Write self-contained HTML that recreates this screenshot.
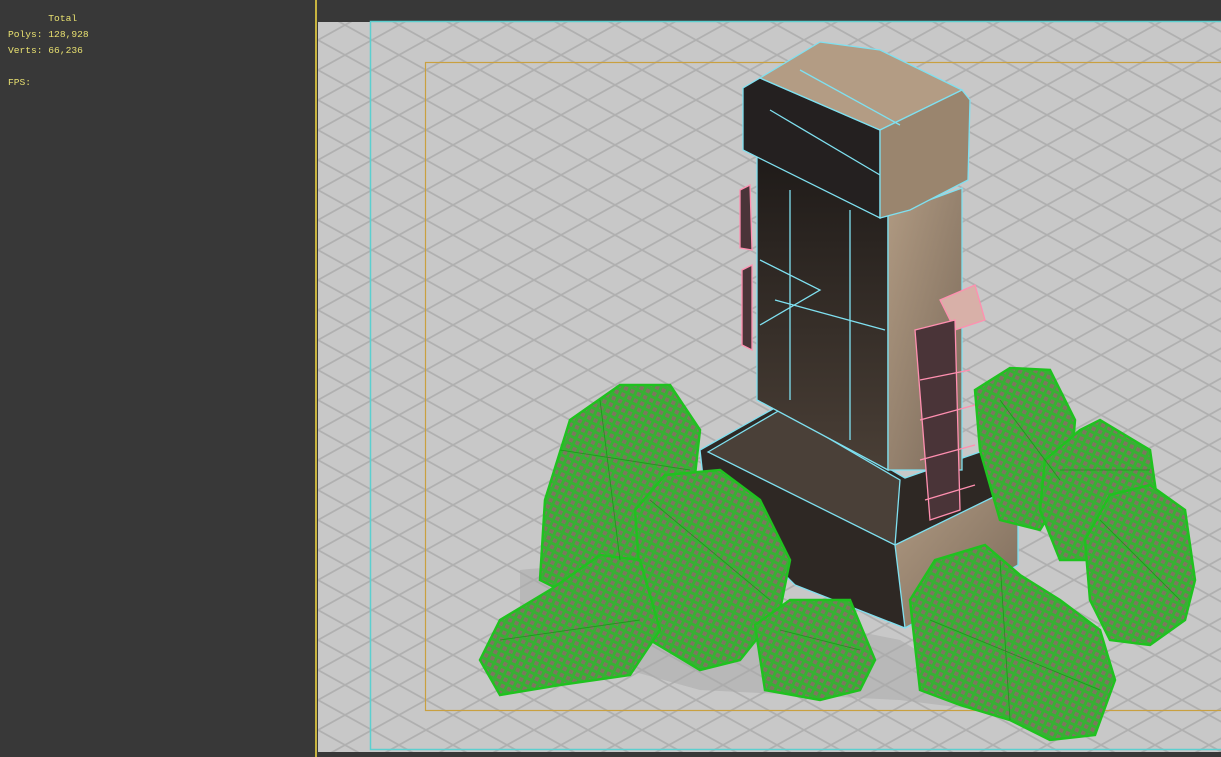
<!DOCTYPE html>
<html><head><meta charset="utf-8"><style>
html,body{margin:0;padding:0;width:1221px;height:757px;overflow:hidden;background:#383838;font-family:"Liberation Mono",monospace}
.t{position:absolute;color:#e8e070;font-size:9.6px;font-family:"Liberation Mono",monospace;white-space:pre;line-height:16px}
</style></head><body>
<div class="t" style="left:8px;top:11px">       Total
Polys: 128,928
Verts: 66,236

FPS:</div>
<div style="position:absolute;left:315px;top:0;width:2px;height:757px;background:#c8b440"></div>
<svg style="position:absolute;left:0;top:0" width="1221" height="757" viewBox="0 0 1221 757">
<defs>
<pattern id="g" width="54" height="30" patternUnits="userSpaceOnUse" x="318" y="10">
<rect width="54" height="30" fill="#c8c8c8"/>
<path d="M0 0 L54 30 M54 0 L0 30" stroke="#b0b0b0" stroke-width="1.8"/>
</pattern>
<pattern id="w" width="7" height="7" patternUnits="userSpaceOnUse" patternTransform="rotate(25)">
<rect width="7" height="7" fill="#38b034"/>
<rect x="1.5" y="1.5" width="4" height="4" fill="#7f7560"/>
</pattern>
<linearGradient id="sh" x1="0" x2="0" y1="0" y2="1"><stop offset="0" stop-color="#1e1a18"/><stop offset="1" stop-color="#4a3f36"/></linearGradient>
<linearGradient id="tan" x1="0" x2="1" y1="0" y2="1"><stop offset="0" stop-color="#b09a82"/><stop offset="1" stop-color="#7b6a5a"/></linearGradient>
</defs>
<rect x="318" y="22" width="903" height="730" fill="url(#g)"/>
<rect x="370.5" y="21.5" width="860" height="728" fill="none" stroke="#5ccfcf" stroke-width="1.5"/>
<rect x="425.5" y="62.5" width="800" height="648" fill="none" stroke="#c9a040" stroke-width="1.2"/>
<path d="M520 570 Q600 560 700 600 L900 640 L1000 700 L1060 720 L900 700 L700 690 L520 640Z" fill="#a8a8a8" opacity="0.5"/>
<g stroke="#7fe0f0" stroke-width="1.3">
<polygon points="700,450 780,405 905,478 1000,445 1018,465 1018,565 905,628 795,585 705,495" fill="#2e2824"/>
<polygon points="895,545 1018,485 1018,565 905,628" fill="url(#tan)"/>
<polygon points="708,452 780,410 900,480 895,545" fill="#4a4038"/>
<polygon points="757,150 757,400 888,470 888,215" fill="url(#sh)"/>
<polygon points="888,215 962,188 962,470 888,470" fill="url(#tan)"/>
<polygon points="743,88 743,150 880,218 880,130 760,78" fill="#242020"/>
<polygon points="760,78 820,42 880,50 962,90 880,130" fill="#b39c84"/>
<polygon points="880,130 962,90 970,100 968,180 910,210 880,218" fill="#9a856e"/>
<path d="M770 110 L880 175 M800 70 L900 125 M760 260 L820 290 L760 325 M775 300 L885 330 M790 190 L790 400 M850 210 L850 440" fill="none"/>
</g>
<g stroke="#ff8fb0" stroke-width="1.3" fill="#4a3438">
<path d="M940 300 L975 285 L985 320 L955 330Z" fill="#d8b0a8"/>
<path d="M915 330 L955 320 L960 510 L930 520Z"/>
<path d="M920 380 L970 370 M920 420 L975 405 M920 460 L975 445 M925 500 L975 485" fill="none"/>
<path d="M740 190 L750 185 L752 250 L740 248Z M742 270 L752 265 L752 350 L742 345Z"/>
</g>
<g fill="url(#w)" stroke="#1fc21f" stroke-width="2.5">
<polygon points="975,390 1010,368 1050,370 1075,420 1070,480 1040,530 1000,520 980,450"/>
<polygon points="1045,460 1080,430 1100,420 1150,450 1160,520 1120,560 1060,560 1040,510"/>
<polygon points="1085,540 1110,495 1150,485 1185,510 1195,580 1185,620 1150,645 1110,640 1090,600"/>
<polygon points="545,500 570,420 620,385 670,385 700,430 690,520 640,560 580,600 540,580"/>
<polygon points="635,510 665,475 720,470 760,500 790,560 780,610 740,660 700,670 650,640 640,580"/>
<polygon points="480,660 500,620 550,590 600,555 640,560 660,630 630,675 560,685 500,695"/>
<polygon points="755,625 790,600 850,600 875,660 860,690 820,700 765,690"/>
<polygon points="910,600 935,560 985,545 1020,575 1060,600 1100,630 1115,680 1095,735 1050,740 1010,720 960,705 920,690"/>
</g>
<g stroke="#149014" stroke-width="0.8" fill="none" opacity="0.8">
<path d="M560 450 L690 470 M600 400 L620 560 M650 500 L770 600 M500 640 L640 620 M780 630 L860 650 M930 620 L1100 690 M1000 560 L1010 720 M1000 400 L1060 480 M1100 520 L1180 600 M1060 470 L1150 470"/>
</g>
</svg>
</body></html>
